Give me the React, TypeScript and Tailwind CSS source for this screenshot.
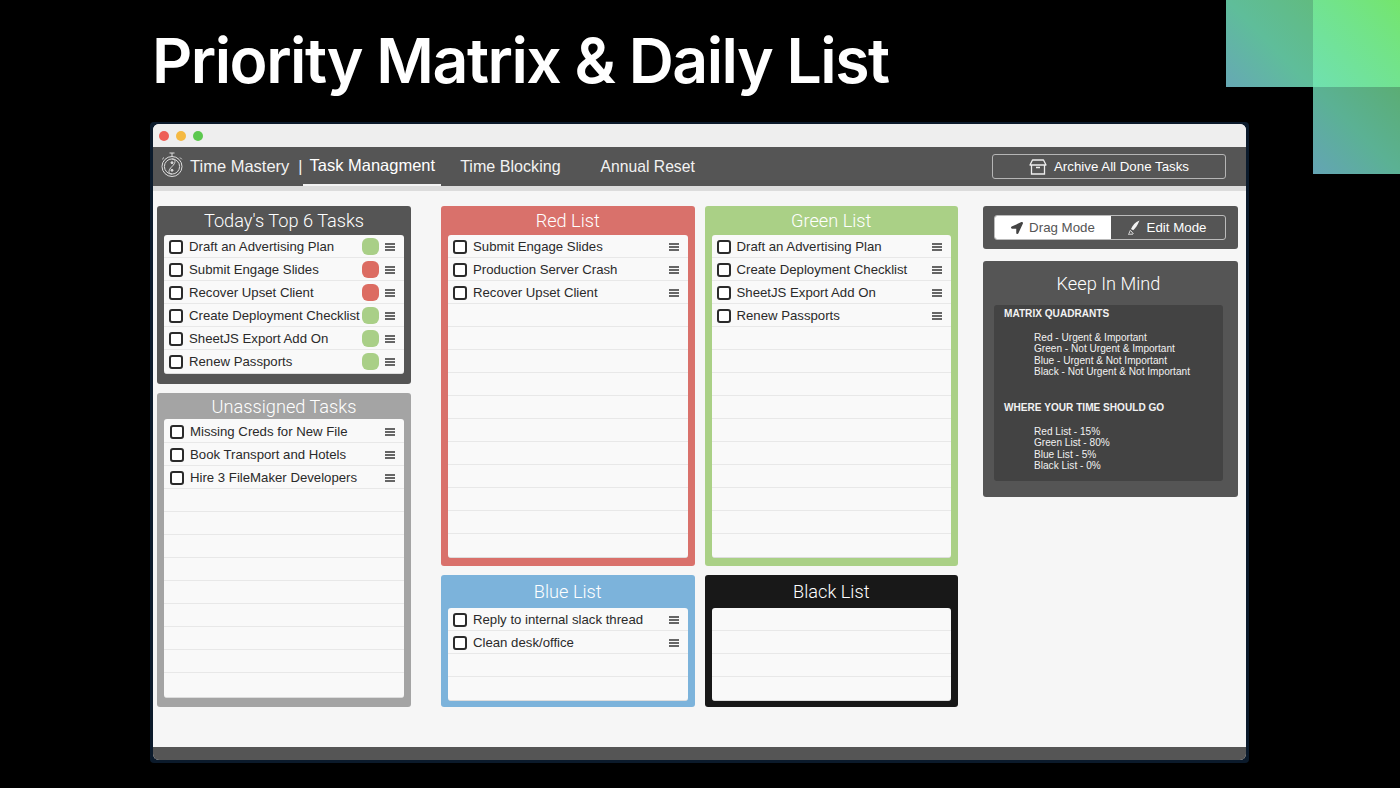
import { FaLocationArrow } from "react-icons/fa";

type Task = { name: string; dot?: "green" | "red" };

const topTasks: Task[] = [
  { name: "Draft an Advertising Plan", dot: "green" },
  { name: "Submit Engage Slides", dot: "red" },
  { name: "Recover Upset Client", dot: "red" },
  { name: "Create Deployment Checklist", dot: "green" },
  { name: "SheetJS Export Add On", dot: "green" },
  { name: "Renew Passports", dot: "green" },
];

function Handle() {
  return (
    <div className="ml-auto flex w-[10px] shrink-0 flex-col gap-[1px]">
      <div className="h-[2px] bg-[#666]"></div>
      <div className="h-[2px] bg-[#666]"></div>
      <div className="h-[2px] bg-[#666]"></div>
    </div>
  );
}

function Row({ task, wide }: { task?: Task; wide?: boolean }) {
  return (
    <div className="flex h-[23px] shrink-0 items-center pl-[5px] pr-[9px] not-last:pt-[1px]">
      {task && (
        <>
          <div className={`h-[14px] w-[14px] shrink-0 rounded-[3px] border-2 border-[#2a2a2a] bg-white ${wide ? "ml-[1px] mr-[6px]" : "mr-[6px]"}`}></div>
          <span className="whitespace-nowrap text-[13.2px] text-[#2a2a2a]">{task.name}</span>
          {task.dot && (
            <div className={`absolute left-[198px] h-[17px] w-[17px] rounded-[6px] ${task.dot === "green" ? "bg-[#a9cf87]" : "bg-[#dc6c62]"}`}></div>
          )}
          <Handle />
        </>
      )}
    </div>
  );
}

function Panel({
  title,
  bg,
  tasks,
  rows,
  titleClass,
  listClass,
  wide,
  padClass,
}: {
  title: string;
  bg: string;
  tasks: Task[];
  rows: number;
  titleClass?: string;
  listClass?: string;
  wide?: boolean;
  padClass?: string;
}) {
  const blanks = Array.from({ length: rows - tasks.length });
  return (
    <div className={`flex flex-col rounded-[3px] px-[7px] ${padClass ?? "pb-[8px]"} ${bg}`}>
      <div className={`text-center font-['Roboto',sans-serif] text-[18.2px] font-light text-white ${titleClass ?? "pb-[3px] pt-[4px] leading-[22px]"}`}>{title}</div>
      <div className={`relative flex flex-col divide-y divide-[#e8e8e8] overflow-hidden rounded-[3px] border-b border-[#ddd] bg-[#f9f9f9] ${listClass ?? ""}`}>
        {tasks.map((t) => (
          <Row key={t.name} task={t} wide={wide} />
        ))}
        {blanks.map((_, i) => (
          <Row key={i} />
        ))}
      </div>
    </div>
  );
}

function StopwatchIcon() {
  return (
    <svg width="24" height="28" viewBox="0 0 24 28" fill="none" stroke="#ddd" strokeWidth="1">
      <circle cx="12" cy="15.5" r="10" />
      <circle cx="12" cy="15.5" r="7.6" />
      <path d="M9.5 2h5M12 2v3.5M20 6.5l1.8 1.8M4 6.5 2.2 8.3" />
      <path d="M12 8c4 0 4 3.8 0 7.5s-4 7.5 0 7.5" />
      <circle cx="12" cy="11.7" r="1" fill="#ddd" />
      <circle cx="12" cy="19.3" r="1" fill="#ddd" />
    </svg>
  );
}

function ArchiveIcon() {
  return (
    <svg width="18" height="16" viewBox="0 0 18 16" fill="none" stroke="#eee" strokeWidth="1.3">
      <path d="M3.5 1h11L17 6H1z" strokeLinejoin="round" />
      <path d="M2.5 6v9h13V6" />
      <path d="M7 8.5h4" strokeWidth="1.6" />
    </svg>
  );
}

function PenIcon() {
  return (
    <svg width="14" height="15" viewBox="0 0 14 15" fill="none">
      <path d="M12.5 0.5C8 2 5.5 5.5 4 9l2.2 1.3C8.5 8 10.5 5.5 12.5.5z" fill="#f2f2f2" />
      <path d="M3.5 10 2 13.5M1 14.2h5M4 11l2.5 3" stroke="#ddd" strokeWidth="1" />
    </svg>
  );
}

export default function App() {
  return (
    <div className="relative h-[788px] w-[1400px] overflow-hidden bg-black font-['Liberation_Sans',sans-serif]">
      <div className="absolute left-[1226px] top-0 h-[87px] w-[87px] bg-gradient-to-tr from-[#66a8b4] via-[#5fbd9a] to-[#61bb80]"></div>
      <div className="absolute left-[1313px] top-0 h-[87px] w-[87px] bg-gradient-to-tr from-[#70e0b0] to-[#74e56c]"></div>
      <div className="absolute left-[1313px] top-[87px] h-[87px] w-[87px] bg-gradient-to-tr from-[#64a4b4] via-[#5bb194] to-[#5bad74]"></div>

      <h1 className="h-[122px] pl-[152px] pt-[22px] font-['Inter',sans-serif] text-[62.5px] font-semibold leading-[77px] tracking-[-1.5px] text-white">
        Priority Matrix &amp; Daily List
      </h1>

      <div className="ml-[150px] h-[641px] w-[1099px] rounded-[4px] bg-[#0b1a2b] px-[3px] pb-[3px] pt-[2px]">
        <div className="flex h-[636px] flex-col overflow-hidden rounded-[6px] bg-[#f6f6f6]">
          <div className="flex h-[23px] shrink-0 items-center gap-[7px] bg-[#eeeeee] pl-[6px]">
            <div className="h-[10px] w-[10px] rounded-full bg-[#ee5f57]"></div>
            <div className="h-[10px] w-[10px] rounded-full bg-[#f5b942]"></div>
            <div className="h-[10px] w-[10px] rounded-full bg-[#5cc84e]"></div>
          </div>

          <div className="flex h-[39px] shrink-0 items-center bg-[#555555] text-[16.5px] text-[#f2f2f2]">
            <div className="ml-[7px] mr-[6px] mt-[-3px]">
              <StopwatchIcon />
            </div>
            <span>Time Mastery</span>
            <span className="ml-[9px] mr-[1px] text-[16px]">|</span>
            <div className="flex h-full flex-col justify-center border-b-2 border-[#f2f2f2] px-[6px] pt-[1px] text-white">
              <span className="mt-[-2px]">Task Managment</span>
            </div>
            <span className="ml-[19px] text-[16.1px]">Time Blocking</span>
            <span className="ml-[40px] text-[15.7px]">Annual Reset</span>
            <div className="ml-auto mr-[20px] flex h-[25px] w-[234px] items-center justify-center gap-[7px] rounded-[3px] border border-[#b5b5b5] text-[13.3px] text-white">
              <ArchiveIcon />
              Archive All Done Tasks
            </div>
          </div>
          <div className="h-[5px] shrink-0 bg-[#dcdcdc]"></div>

          <div className="flex flex-1 items-start pl-[4px] pt-[15px]">
            <div className="flex w-[254px] shrink-0 flex-col gap-[9px]">
              <Panel title="Today's Top 6 Tasks" bg="bg-[#555555]" rows={6} padClass="pb-[10px]" tasks={topTasks} />
              <Panel title="Unassigned Tasks" bg="bg-[#a4a4a4]" rows={12} wide padClass="pb-[9px]" titleClass="pt-[2px] pb-[1px] leading-[23px]" listClass="pt-[1px] pb-[1px]" tasks={[{ name: "Missing Creds for New File" }, { name: "Book Transport and Hotels" }, { name: "Hire 3 FileMaker Developers" }]} />
            </div>

            <div className="ml-[30px] grid w-[517px] shrink-0 grid-cols-2 gap-x-[10px] gap-y-[9px]">
              <Panel title="Red List" bg="bg-[#d9716b]" rows={14} tasks={[{ name: "Submit Engage Slides" }, { name: "Production Server Crash" }, { name: "Recover Upset Client" }]} />
              <Panel title="Green List" bg="bg-[#aad086]" rows={14} tasks={[{ name: "Draft an Advertising Plan" }, { name: "Create Deployment Checklist" }, { name: "SheetJS Export Add On" }, { name: "Renew Passports" }]} />
              <Panel title="Blue List" bg="bg-[#7cb3db]" rows={4} padClass="pb-[6px]" titleClass="pt-[6px] pb-[6px] leading-[21px]" tasks={[{ name: "Reply to internal slack thread" }, { name: "Clean desk/office" }]} />
              <Panel title="Black List" bg="bg-[#181818]" rows={4} padClass="pb-[6px]" titleClass="pt-[6px] pb-[6px] leading-[21px]" tasks={[]} />
            </div>

            <div className="ml-[25px] flex w-[255px] shrink-0 flex-col gap-[12px]">
              <div className="rounded-[3px] bg-[#555] py-[9px] pl-[11px] pr-[12px]">
                <div className="flex h-[25px] overflow-hidden rounded-[3px] border border-[#bbb] text-[13.3px]">
                  <div className="flex w-[116px] items-center justify-center gap-[6px] bg-white text-[#555]">
                    <FaLocationArrow size={12} className="text-[#444]" />
                    Drag Mode
                  </div>
                  <div className="flex flex-1 items-center justify-center gap-[6px] pr-[3px] text-white">
                    <PenIcon />
                    Edit Mode
                  </div>
                </div>
              </div>

              <div className="rounded-[3px] bg-[#555] pb-[16px] pl-[11px] pr-[15px]">
                <div className="pb-[8px] pt-[10px] text-center font-['Roboto',sans-serif] text-[18.2px] font-light leading-[26px] text-white">Keep In Mind</div>
                <div className="h-[176px] rounded-[3px] bg-[#434343] px-[10px] pt-[3px] text-[10.1px] leading-[11.6px] text-[#f2f2f2]">
                  <div className="font-bold">MATRIX QUADRANTS</div>
                  <div className="ml-[30px] mt-[12px]">
                    <div>Red - Urgent &amp; Important</div>
                    <div>Green - Not Urgent &amp; Important</div>
                    <div>Blue - Urgent &amp; Not Important</div>
                    <div>Black - Not Urgent &amp; Not Important</div>
                  </div>
                  <div className="mt-[24px] font-bold">WHERE YOUR TIME SHOULD GO</div>
                  <div className="ml-[30px] mt-[12px]">
                    <div>Red List - 15%</div>
                    <div>Green List - 80%</div>
                    <div>Blue List - 5%</div>
                    <div>Black List - 0%</div>
                  </div>
                </div>
              </div>
            </div>
          </div>

          <div className="h-[13px] shrink-0 bg-[#555555]"></div>
        </div>
      </div>
    </div>
  );
}
